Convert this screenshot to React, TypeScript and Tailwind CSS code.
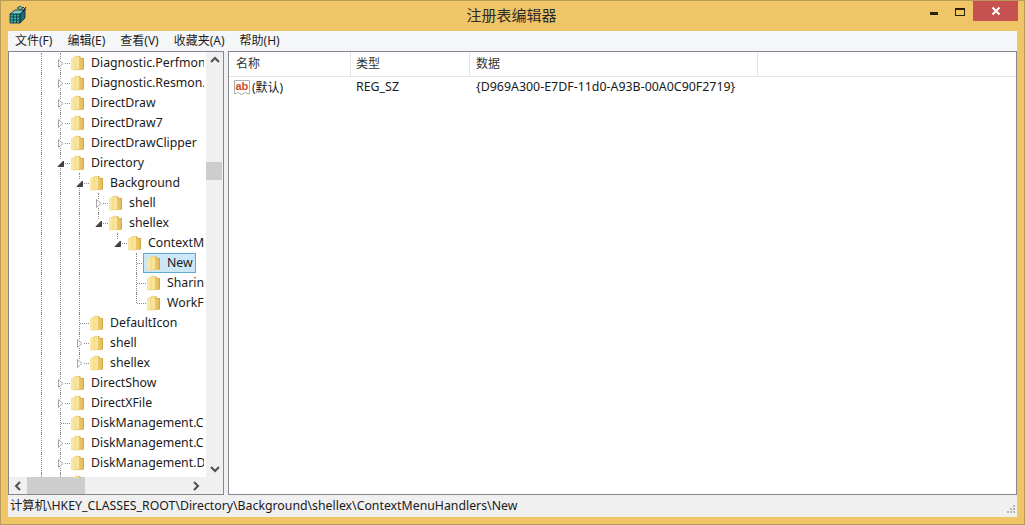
import React from "react";

const font = "[font-family:'Noto_Sans','Noto_Sans_CJK_SC',sans-serif]";

function Folder() {
  return (
    <svg width="16" height="16" viewBox="0 0 16 16" className="shrink-0">
      <defs>
        <linearGradient id="fa" x1="0" y1="0" x2="1" y2="0">
          <stop offset="0" stopColor="#fdf0b4" />
          <stop offset="1" stopColor="#f2d272" />
        </linearGradient>
        <linearGradient id="fb" x1="0" y1="0" x2="1" y2="0">
          <stop offset="0" stopColor="#eac05a" />
          <stop offset="1" stopColor="#d0a644" />
        </linearGradient>
      </defs>
      <g transform="translate(-2 0)">
        <path d="M2 4 L7 1 L9 1 L9 15 L3 15 L2 14 Z" fill="url(#fa)" stroke="#ecd58e" strokeWidth="0.6" />
        <path d="M9 1 L11 1 L12 3 L15 3 L15 14 L14 15 L9 15 Z" fill="url(#fb)" />
        <path d="M11 4 L11 15 M13 4 L13 15" stroke="#f5dd8c" strokeWidth="0.8" />
        <path d="M7 3 L10 1 L10 14 L7 15 Z" fill="#f8e49a" />
      </g>
    </svg>
  );
}

function Expander({ state }: { state: "open" | "closed" }) {
  return (
    <svg width="9" height="9" viewBox="0 0 9 9" className="relative bg-white">
      {state === "closed" ? (
        <path d="M2.5 0.5 L7 4.5 L2.5 8.5 Z" fill="#fff" stroke="#a6a6a6" />
      ) : (
        <path d="M7.5 2 L7.5 7.5 L2 7.5 Z" fill="#404040" stroke="#404040" />
      )}
    </svg>
  );
}

type Row = {
  text: string;
  level: number;
  state?: "open" | "closed";
  guides: number[];
  last?: boolean;
  selected?: boolean;
};

const rows: Row[] = [
  { text: "Diagnostic.Perfmon", level: 0, state: "closed", guides: [0] },
  { text: "Diagnostic.Resmon.", level: 0, state: "closed", guides: [0] },
  { text: "DirectDraw", level: 0, state: "closed", guides: [0] },
  { text: "DirectDraw7", level: 0, state: "closed", guides: [0] },
  { text: "DirectDrawClipper", level: 0, state: "closed", guides: [0] },
  { text: "Directory", level: 0, state: "open", guides: [0] },
  { text: "Background", level: 1, state: "open", guides: [0, 1] },
  { text: "shell", level: 2, state: "closed", guides: [0, 1, 2] },
  { text: "shellex", level: 2, state: "open", guides: [0, 1], last: true },
  { text: "ContextM", level: 3, state: "open", guides: [0, 1], last: true },
  { text: "New", level: 4, guides: [0, 1, 4], selected: true },
  { text: "Sharing", level: 4, guides: [0, 1, 4] },
  { text: "WorkF", level: 4, guides: [0, 1], last: true },
  { text: "DefaultIcon", level: 1, guides: [0, 1] },
  { text: "shell", level: 1, state: "closed", guides: [0, 1] },
  { text: "shellex", level: 1, state: "closed", guides: [0], last: true },
  { text: "DirectShow", level: 0, state: "closed", guides: [0] },
  { text: "DirectXFile", level: 0, state: "closed", guides: [0] },
  { text: "DiskManagement.C", level: 0, guides: [0] },
  { text: "DiskManagement.C", level: 0, state: "closed", guides: [0] },
  { text: "DiskManagement.D", level: 0, state: "closed", guides: [0] },
  { text: "", level: 0, state: "closed", guides: [0] },
];

function Cell({ line, half, child, hook }: { line?: boolean; half?: boolean; child?: React.ReactNode; hook?: boolean }) {
  return (
    <div className="relative w-[19px] h-5 shrink-0 flex items-center justify-center">
      {line && (
        <div className={`absolute left-[9px] top-0 border-l border-dotted border-[#8a8a8a] ${half ? "h-[10px]" : "bottom-0"}`} />
      )}
      {hook && <div className="absolute left-[10px] right-0 top-[10px] border-t border-dotted border-[#8a8a8a]" />}
      {child}
    </div>
  );
}

function TreeRow({ r }: { r: Row }) {
  const cells: React.ReactNode[] = [];
  cells.push(<Cell key="root" line />);
  for (let l = 0; l <= r.level; l++) {
    const own = l === r.level;
    cells.push(
      <Cell
        key={l}
        line={r.guides.includes(l) || own}
        half={own && r.last}
        hook={own}
        child={own && r.state ? <Expander state={r.state} /> : undefined}
      />
    );
  }
  return (
    <div className="flex h-5 items-center whitespace-nowrap">
      {cells}
      <div className={`relative -ml-[3px] pl-[4px] flex items-center h-5 shrink-0 ${r.selected ? "bg-[#cce8f7] outline outline-1 -outline-offset-1 outline-[#5eaad2]" : ""}`}>
        <Folder />
        <span className="ml-[4px] mr-[3px] text-[12.3px] text-[#1a1a1a]">{r.text}</span>
      </div>
    </div>
  );
}

function Chevron({ dir }: { dir: "up" | "down" | "left" | "right" }) {
  const d = {
    up: "M1 7 L5 3 L9 7",
    down: "M1 3 L5 7 L9 3",
    left: "M7 1 L3 5 L7 9",
    right: "M3 1 L7 5 L3 9",
  }[dir];
  return (
    <svg width="10" height="10" viewBox="0 0 10 10">
      <path d={d} fill="none" stroke="#505050" strokeWidth="2" />
    </svg>
  );
}

function AbIcon() {
  return (
    <svg width="16" height="17" viewBox="0 0 16 17" className="shrink-0">
      <path d="M0.5 1.5 L15.5 1.5 L15.5 15 L11 13.5 L8 15.5 L4 13.5 L0.5 15 Z" fill="#fff" stroke="#b0b0b0" />
      <text x="1.5" y="11" fontSize="11" fontWeight="700" fill="#cf4a2a" fontFamily="Liberation Sans">ab</text>
    </svg>
  );
}

function AppIcon() {
  return (
    <svg width="20" height="20" viewBox="0 0 20 20">
      <path d="M2 9 L12 9 L12 18 L2 18 Z" fill="#35b7ae" stroke="#123" strokeWidth="0.8" />
      <path d="M2 9 L7 5 L17 5 L12 9 Z" fill="#6fd4c8" stroke="#123" strokeWidth="0.8" />
      <path d="M12 9 L17 5 L17 13 L12 18 Z" fill="#1b6d74" stroke="#123" strokeWidth="0.8" />
      <path d="M5.3 9 L5.3 18 M8.6 9 L8.6 18 M2 12 L12 12 M2 15 L12 15" stroke="#0e2a33" strokeWidth="0.8" />
      <path d="M9 3 L12 1 L15 3 L12 5 Z" fill="#58c7be" stroke="#123" strokeWidth="0.7" />
      <path d="M14 7 L18 2 M15 2 L18 5" stroke="#123" strokeWidth="1" />
    </svg>
  );
}

const menus = ["文件(F)", "编辑(E)", "查看(V)", "收藏夹(A)", "帮助(H)"];

export default function App() {
  return (
    <div className={`${font} w-[1025px] h-[525px] overflow-hidden flex flex-col bg-[#efc568] border border-[#b89a5a] text-[#1a1a1a]`}>
      <div className="h-[30px] shrink-0 relative flex items-center justify-center">
        <div className="absolute left-[7px] top-[4px]"><AppIcon /></div>
        <span className="text-[15px] text-[#2b2b2b] -mt-[1px] -ml-[2px]">注册表编辑器</span>
        <div className="absolute right-[6px] top-0 flex items-start">
          <div className="w-[27px] h-[19px] flex items-start justify-center">
            <div className="mt-[11px] w-[8px] h-[3px] bg-[#2a2208]" />
          </div>
          <div className="w-[26px] h-[19px] flex items-start justify-center">
            <div className="mt-[7px] w-[10px] h-[8px] border border-t-2 border-[#2a2208]" />
          </div>
          <div className="w-[45px] h-[20px] bg-[#c75050] flex items-center justify-center">
            <svg width="10" height="10" viewBox="0 0 10 10">
              <path d="M1.5 1.5 L8.5 8.5 M8.5 1.5 L1.5 8.5" stroke="#fff" strokeWidth="2" />
            </svg>
          </div>
        </div>
      </div>
      <div className="flex-1 mx-[7px] flex flex-col min-h-0 bg-[#f0f0f0]">
        <div className="h-[20px] shrink-0 flex items-center bg-[#f5f6f7] pl-[7px] gap-[15px] text-[12px] text-[#1e1e1e]">
          {menus.map((m) => (
            <span key={m}>{m}</span>
          ))}
        </div>
        <div className="flex-1 flex min-h-0 gap-[4px]">
          <div className="w-[216px] shrink-0 border border-[#828790] bg-[#f0f0f0] flex flex-col min-h-0">
            <div className="flex-1 flex min-h-0">
              <div className="w-[197px] bg-white pt-[1px] pr-[2px]">
                <div className="h-[425px] overflow-hidden pl-[23px]">
                  {rows.map((r, i) => (
                    <TreeRow key={i} r={r} />
                  ))}
                </div>
              </div>
              <div className="w-[17px] shrink-0 bg-[#f0f0f0] flex flex-col items-center justify-between py-[3px]">
                <Chevron dir="up" />
                <div className="flex-1 w-full pt-[97px]">
                  <div className="h-[18px] mr-[1px] bg-[#cdcdcd]" />
                </div>
                <Chevron dir="down" />
              </div>
            </div>
            <div className="h-[17px] shrink-0 flex items-center bg-[#f0f0f0] pl-[4px] pr-[22px]">
              <Chevron dir="left" />
              <div className="flex-1 h-full">
                <div className="ml-[4px] w-[58px] h-full bg-[#cdcdcd]" />
              </div>
              <Chevron dir="right" />
            </div>
          </div>
          <div className="flex-1 min-w-0 border border-[#828790] bg-white">
            <div className="h-[25px] flex text-[12px] text-[#333] border-b border-[#e5e5e5]">
              <div className="w-[122px] pl-[7px] flex items-center border-r border-[#e5e5e5]">名称</div>
              <div className="w-[119px] pl-[5px] flex items-center border-r border-[#e5e5e5]">类型</div>
              <div className="w-[288px] pl-[6px] flex items-center border-r border-[#e5e5e5]">数据</div>
            </div>
            <div className="h-[21px] flex items-center text-[12.4px] text-[#1a1a1a]">
              <div className="w-[122px] pl-[5px] flex items-center gap-[2px]">
                <AbIcon />
                <span className="text-[12px]">(默认)</span>
              </div>
              <div className="w-[119px] pl-[5px]">REG_SZ</div>
              <div className="pl-[6px]">{"{D969A300-E7DF-11d0-A93B-00A0C90F2719}"}</div>
            </div>
          </div>
        </div>
        <div className="h-[22px] shrink-0 relative flex items-center pl-[2px] pt-[1px] text-[12.3px] text-[#1a1a1a] bg-[#f0f0f0]">
          <span>计算机\HKEY_CLASSES_ROOT\Directory\Background\shellex\ContextMenuHandlers\New</span>
          <svg width="12" height="12" viewBox="0 0 12 12" className="absolute right-[1px] bottom-[1px]">
            <path d="M9 1h2v2H9zM6 4h2v2H6zM9 4h2v2H9zM3 7h2v2H3zM6 7h2v2H6zM9 7h2v2H9z" fill="#b5b5b5" />
          </svg>
        </div>
      </div>
      <div className="h-[7px] shrink-0" />
    </div>
  );
}
